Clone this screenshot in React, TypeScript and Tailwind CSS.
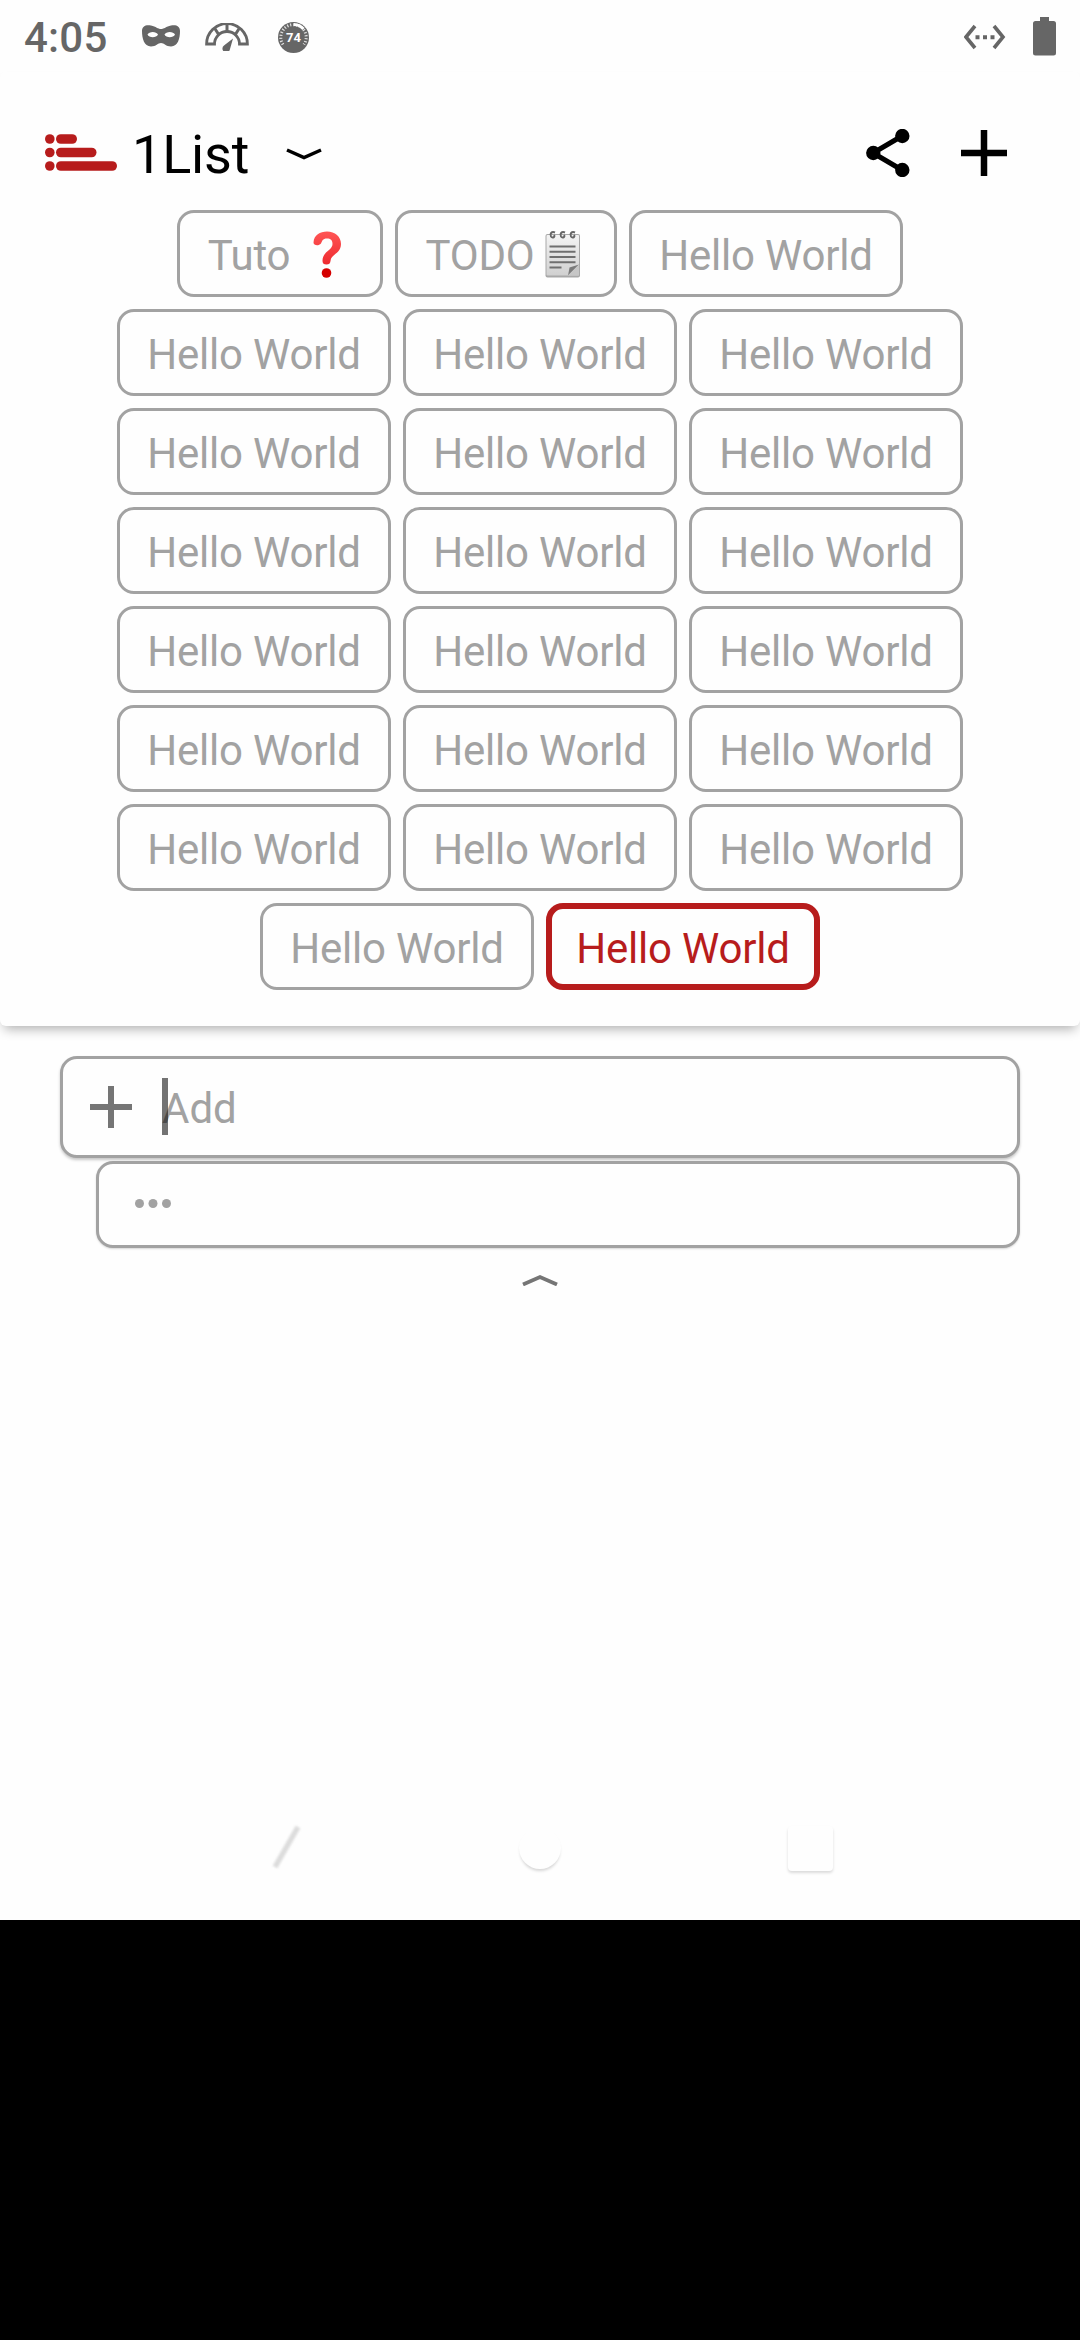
const GRAY = "#a2a2a2";

function StatusBar() {
  return (
    <div className="flex h-[72px] shrink-0 items-center justify-between pl-6 text-[#666666]">
      <div className="flex items-center">
        <span className="w-[117px] pt-[4px] text-[42px] leading-[68px] font-medium tracking-[0.2px]">4:05</span>
        <svg width="40" height="24" viewBox="141 24 40 24" fill="currentColor">
          <path fillRule="evenodd" d="M142 31C142 26 146 24.500 151 25.500C156 26.500 158 29 161 29S166 26.500 171 25.500C176 24.500 180 26 180 31C180 38 178 46.500 171 46.500C166 46.500 164 43 161 43S156 46.500 151 46.500C144 46.500 142 38 142 31ZM147.500 34.500C149 38 156.500 38 158 34.500C156.500 31 149 31 147.500 34.500ZM164.500 34.500C166 38 173.500 38 175 34.500C173.500 31 166 31 164.500 34.500Z" />
        </svg>
        <svg className="mt-[2px] ml-6" width="44" height="28" viewBox="205 23 44 28" fill="none" stroke="currentColor">
          <path strokeWidth="2.800" d="M206.600 44A20.400 20.400 0 0 1 247.400 44H239.500A12.500 12.500 0 0 0 214.500 44Z" />
          <path strokeWidth="3" d="M227 24V32M214.500 28L219 35M239.500 28L235 35" />
          <path fill="currentColor" stroke="none" d="M233 38.500L230 49A3.800 3.800 0 1 1 224 45.500Z" />
        </svg>
        <svg className="mt-px ml-[29px]" width="32" height="32" viewBox="278 20 32 32">
          <circle cx="293.500" cy="36.500" r="15.500" fill="currentColor" />
          <path d="M283 43.500A12.700 12.700 0 1 1 304 43.500" fill="none" stroke="white" strokeWidth="3" strokeDasharray="1.200 1.800" opacity=".8" />
          <path d="M294 23.500A13 13 0 0 1 303.500 28" fill="none" stroke="white" strokeWidth="3" />
          <text x="293.500" y="41.300" textAnchor="middle" fontSize="13" fontWeight="700" fill="white">74</text>
        </svg>
      </div>
      <div className="flex items-center pr-6">
        <svg className="mt-px" width="42" height="26" viewBox="964 23.500 42 26" fill="none" stroke="currentColor" strokeWidth="3.600">
          <path d="M975 25.500L966 36.500L975 47.500M994 25.500L1003 36.500L994 47.500" />
          <path d="M975.500 36.700H995" strokeWidth="4" strokeDasharray="4 3.500" />
        </svg>
        <svg className="ml-[27px]" width="23" height="39" viewBox="0 0 23 39" fill="currentColor">
          <path d="M7 0H16V4H20.500Q23 4 23 6.500V36Q23 38.500 20.500 38.500H2.500Q0 38.500 0 36V6.500Q0 4 2.500 4H7Z" />
        </svg>
      </div>
    </div>
  );
}

function Header() {
  return (
    <div className="flex h-[138px] items-center pt-[24px] pl-[45px] pr-[73px]">
      <svg className="mt-[-1px]" width="72" height="37" viewBox="0 0 72 37" fill="#b71c1c">
        <circle cx="4.800" cy="5" r="4.800" /><circle cx="4.800" cy="18.500" r="4.800" /><circle cx="4.800" cy="32" r="4.800" />
        <rect x="11" y="0.200" width="21" height="9.600" rx="4.800" />
        <rect x="11" y="13.700" width="40.500" height="9.600" rx="4.800" />
        <rect x="11" y="27.200" width="61" height="9.600" rx="4.800" />
      </svg>
      <h1 className="ml-[15px] mt-[4px] text-[54px] leading-[64px] tracking-[-0.2px] text-black">1List</h1>
      <svg className="ml-[37px] mt-[1px]" width="36" height="12" viewBox="0 0 36 12">
        <path d="M1 2L18 9.500L35 2" fill="none" stroke="black" strokeWidth="3.500" />
      </svg>
      <svg className="ml-auto mt-[-1px]" width="44" height="48" viewBox="866 129 44 48">
        <path d="M902 136L873 153L902 170" fill="none" stroke="black" strokeWidth="5" />
        <circle cx="873.300" cy="153" r="7.200" /><circle cx="902.300" cy="136" r="7.200" /><circle cx="902.300" cy="170" r="7.200" />
      </svg>
      <svg className="ml-[51px] mt-[-1px]" width="46" height="46" viewBox="0 0 46 46">
        <path d="M23 0V46M0 23H46" stroke="black" strokeWidth="6.500" />
      </svg>
    </div>
  );
}

function QuestionMark() {
  return (
    <svg className="mt-[-3px] ml-[14px]" width="48" height="48" viewBox="0 0 48 48">
      <defs>
        <linearGradient id="q" x1="0" y1="0" x2="0" y2="1">
          <stop offset="0" stopColor="#ff5555" /><stop offset="1" stopColor="#ee2b30" />
        </linearGradient>
      </defs>
      <path fill="url(#q)" d="M9.500 12.500C10 5 16 1.500 23 1.500C31 1.500 37 6.500 37 14C37 24 26.800 24 26.500 31Q26.200 34.500 22.500 34.500Q18.500 34.500 18.500 31C18.500 21 28.500 20.500 28.500 14C28.500 10 26.500 8.500 23 8.500C18.500 8.500 18.300 11 17 13.500C14.500 16.500 9.500 15.500 9.500 12.500Z" />
      <circle cx="22.500" cy="43" r="4.800" fill="#d50000" />
    </svg>
  );
}

function NotePad() {
  return (
    <svg className="mt-[-3px] ml-[6px]" width="46" height="48" viewBox="0 0 46 48">
      <defs>
        <linearGradient id="pad" x1="0" y1="0" x2="0" y2="1">
          <stop offset="0" stopColor="#f4f4f4" /><stop offset="1" stopColor="#d0d0d0" />
        </linearGradient>
      </defs>
      <rect x="4.500" y="4" width="34.500" height="43.500" rx="2" fill="#a8a8a8" />
      <rect x="5.500" y="5" width="32.500" height="40.500" rx="1" fill="url(#pad)" />
      <path d="M27 45.500L28.500 37.500L38 34.500Z" fill="#7b7b7b" />
      <path d="M38 34.500V45.500H27Z" fill="#c6c6c6" />
      <path d="M8.500 16.500H34.500M8.500 21.800H34.500M8.500 27H34.500M8.500 32.200H34.500M8.500 37.500H20.500" stroke="#6f6f6f" strokeWidth="2" />
      <g fill="none" stroke="#666" strokeWidth="2">
        <path d="M14 2.500C10.500 1 8.500 4 10 6.500C11.500 8.500 14.500 7 13 5" />
        <path d="M24 2.500C20.500 1 18.500 4 20 6.500C21.500 8.500 24.500 7 23 5" />
        <path d="M34 2.500C30.500 1 28.500 4 30 6.500C31.500 8.500 34.500 7 33 5" />
      </g>
    </svg>
  );
}

const HELLO_COUNT = 20;

function ListChips() {
  const base = "flex h-[87px] items-center justify-center rounded-[17px] pt-[3px] text-[42px] leading-[49px] tracking-[-0.2px] whitespace-nowrap";
  return (
    <div className="flex flex-wrap justify-center gap-3 px-[100px]">
      <div className={`${base} w-[206px] border-3 border-[#a2a2a2] text-[#a2a2a2]`}>
        Tuto<QuestionMark />
      </div>
      <div className={`${base} w-[222px] border-3 border-[#a2a2a2] text-[#a2a2a2]`}>
        TODO<NotePad />
      </div>
      {Array.from({ length: HELLO_COUNT }, (_, i) => (
        <div key={i} className={`${base} w-[274px] border-3 border-[#a2a2a2] text-[#a2a2a2]`}>Hello World</div>
      ))}
      <div className={`${base} w-[274px] border-6 border-[#b71c1c] text-[#b71c1c]`}>Hello World</div>
    </div>
  );
}

function NavigationBar() {
  return (
    <div className="mt-auto grid h-[144px] grid-cols-3 place-items-center px-[135px]">
      <svg className="ml-[32px] blur-[1px]" width="52" height="60" viewBox="260 1818 52 60">
        <path d="M298 1827L275 1867" stroke="#dcdcdc" strokeWidth="5.500" />
      </svg>
      <div className="h-[42px] w-[42px] rounded-full bg-[#fefefe] shadow-[0_3px_3px_-1px_#00000028]" />
      <div className="h-[45px] w-[45px] rounded-[4px] bg-[#fefefe] shadow-[0_2px_3px_#00000024]" />
    </div>
  );
}

export default function App() {
  return (
    <div className="h-[2340px] w-[1080px] bg-black font-[Roboto,sans-serif]">
      <div className="flex h-[1920px] flex-col overflow-hidden bg-[#fefefe]">
        <StatusBar />
        <div className="h-[954px] shrink-0 rounded-[6px] bg-[#fefefe] shadow-[0_7px_12px_-4px_#00000050]">
          <Header />
          <ListChips />
        </div>
        <div className="mt-[30px] flex flex-col items-end gap-[3px] pr-[60px]">
          <div className="flex h-[102px] w-[960px] items-center rounded-[17px] border-3 border-[#a2a2a2] bg-[#fefefe] pl-[27px] shadow-[0_2px_3px_#00000038]">
            <svg width="42" height="42" viewBox="0 0 42 42"><path d="M21 0V42M0 21H42" stroke="#757575" strokeWidth="6" /></svg>
            <div className="relative ml-[30px] pt-[2px] text-[42px] leading-[49px] text-[#a2a2a2]">
              Add
              <span className="absolute top-[-4px] left-0 h-[57px] w-[6px] bg-black/55" />
            </div>
          </div>
          <div className="flex h-[87px] w-[924px] items-center rounded-[17px] border-3 border-[#a2a2a2] bg-[#fefefe] pl-9 shadow-[0_1px_2px_#00000028]">
            <svg className="mt-[-2px]" width="36" height="9" viewBox="0 0 36 9" fill={GRAY}>
              <circle cx="4.500" cy="4.500" r="4.500" /><circle cx="18" cy="4.500" r="4.500" /><circle cx="31.500" cy="4.500" r="4.500" />
            </svg>
          </div>
        </div>
        <svg className="mx-auto mt-[26px]" width="36" height="12" viewBox="0 0 36 12">
          <path d="M1 10.500L18 3L35 10.500" fill="none" stroke="#757575" strokeWidth="3.800" />
        </svg>
        <NavigationBar />
      </div>
    </div>
  );
}
